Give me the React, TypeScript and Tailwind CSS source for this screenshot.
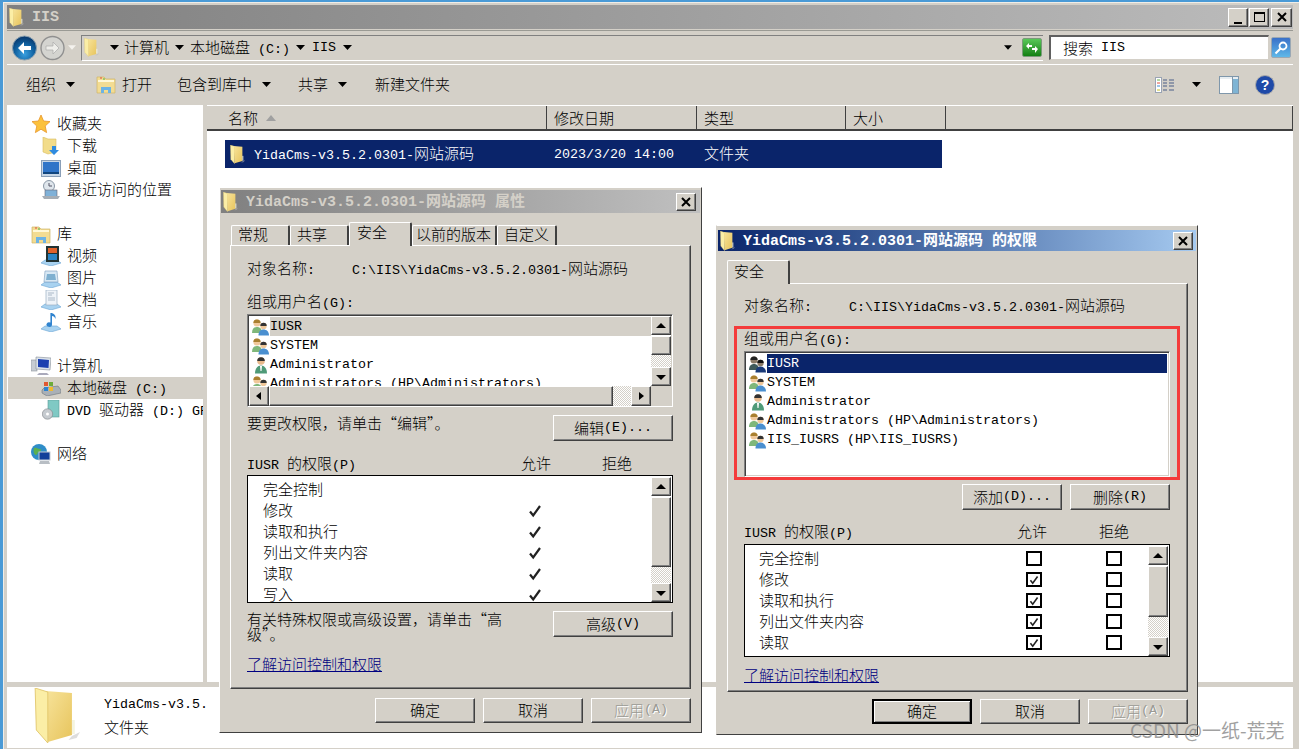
import React from "react";

const raised = "border border-t-white border-l-white border-r-[#404040] border-b-[#404040] shadow-[inset_-1px_-1px_0_#808080]";
const sunken = "border border-t-[#808080] border-l-[#808080] border-r-white border-b-white shadow-[inset_1px_1px_0_#404040,inset_-1px_-1px_0_#d4d0c8]";
const tx = "leading-[19px]";

function T({ t, big = false }: { t: string; big?: boolean }) {
  const runs = t.match(/[\x00-\x7f]+|[^\x00-\x7f]+/g) || [];
  return (
    <>
      {runs.map((r, i) =>
        /^[\x00-\x7f]/.test(r) ? (
          <span key={i} className={big ? "text-[15px] whitespace-pre" : "text-[13.33px] whitespace-pre"}>{r}</span>
        ) : (
          <span key={i} className={`text-[15px] font-['Noto_Sans_CJK_SC',sans-serif] ${big ? "font-bold" : "font-light"}`}>{r}</span>
        )
      )}
    </>
  );
}

function Tri({ c = "#000", w = 9 }: { c?: string; w?: number }) {
  return (
    <svg width={w} height={5} viewBox="0 0 9 5" className="shrink-0">
      <polygon points="0,0 9,0 4.5,5" fill={c} />
    </svg>
  );
}

function Folder({ w = 16, h = 20 }: { w?: number; h?: number }) {
  return (
    <svg width={w} height={h} viewBox="0 0 40 56" preserveAspectRatio="none" className="shrink-0">
      <defs>
        <linearGradient id="fb" x1="0" y1="0" x2="1" y2="1">
          <stop offset="0" stopColor="#f7e39a" />
          <stop offset="1" stopColor="#e7c45c" />
        </linearGradient>
      </defs>
      <polygon points="33,48 40,44 37,50 30,52" fill="#bbb" opacity="0.5" />
      <polygon points="10,3 33,5 33,47 12,54" fill="url(#fb)" />
      <polygon points="1,0 12,4 12,55 2,42" fill="#fbeea6" stroke="#e0c468" strokeWidth="0.8" />
      <rect x="33" y="32" width="2.5" height="14" fill="#f4f4e0" />
    </svg>
  );
}

function Users({ dark = false }: { dark?: boolean }) {
  const a = dark ? "#3e5a5a" : "#7fb77a";
  const b = dark ? "#1a3a78" : "#4a8fd0";
  const s = dark ? "#8a7a66" : "#f0c89a";
  const hr = dark ? "#222" : "#a98030";
  return (
    <svg width="19" height="18" viewBox="0 0 19 18" className="shrink-0">
      <circle cx="6" cy="5" r="3.6" fill={s} />
      <path d="M2.4 5a3.6 3.6 0 0 1 7.2 0z" fill={hr} />
      <path d="M1 15c0-4 2-6 5-6s5 2 5 6z" fill={a} />
      <circle cx="12.5" cy="8" r="3.2" fill={s} />
      <path d="M9.3 8a3.2 3.2 0 0 1 6.4 0z" fill={dark ? "#111" : "#333"} />
      <path d="M7.5 17.5c0-4 2-6 5-6s5.5 2 5.5 6z" fill={b} />
    </svg>
  );
}

function User() {
  return (
    <svg width="19" height="18" viewBox="0 0 19 18" className="shrink-0">
      <circle cx="10" cy="5" r="3.8" fill="#e8b98c" />
      <path d="M6.2 5a3.8 3.8 0 0 1 7.6 0z" fill="#333" />
      <path d="M4 17.5c0-5 2.5-8 6-8s6 3 6 8z" fill="#4f9a78" />
      <path d="M9 10h2l-.5 5h-1z" fill="#fff" />
    </svg>
  );
}

function ScrollBtn({ dir, className = "" }: { dir: "u" | "d" | "l" | "r"; className?: string }) {
  const pts = { u: "1,7 11,7 6,2", d: "1,3 11,3 6,8", l: "8,1 8,9 3,5", r: "4,1 4,9 9,5" }[dir];
  return (
    <div className={`${raised} bg-[#d4d0c8] flex items-center justify-center shrink-0 ${className}`}>
      <svg width="12" height="10" viewBox="0 0 12 10"><polygon points={pts} fill="#000" /></svg>
    </div>
  );
}

const checker = "bg-[repeating-conic-gradient(#d4d0c8_0_25%,#ffffff_0_50%)] bg-size-[2px_2px]";

function VBar({ thumb, track, className = "" }: { thumb: string; track: string; className?: string }) {
  return (
    <div className={`flex flex-col w-[20px] shrink-0 ${className}`}>
      <ScrollBtn dir="u" className="h-[19px]" />
      <div className={`${raised} bg-[#d4d0c8] ${thumb} mt-[1px]`} />
      <div className={`${checker} ${track}`} />
      <ScrollBtn dir="d" className="h-[19px]" />
    </div>
  );
}

function Btn({ t, w = "w-[100px]", h = "h-[25px]", off = false, def = false }: { t: string; w?: string; h?: string; off?: boolean; def?: boolean }) {
  return (
    <div
      className={`${w} ${h} shrink-0 bg-[#d4d0c8] flex items-center justify-center leading-[19px] pb-[2px] ${
        def ? "border-2 border-black shadow-[inset_1px_1px_0_#fff,inset_-1px_-1px_0_#808080]" : raised
      } ${off ? "text-[#9a9a94] [text-shadow:1px_1px_0_#fff]" : "text-black"}`}
    >
      <T t={t} />
    </div>
  );
}

function Line({ t, className = "" }: { t: string; className?: string }) {
  return (
    <div className={`h-[19px] leading-[17px] whitespace-nowrap ${className}`}>
      <T t={t} />
    </div>
  );
}

function TitleBar({ t, active, className }: { t: string; active: boolean; className: string }) {
  return (
    <div
      className={`flex items-center shrink-0 ${className} ${
        active ? "bg-linear-to-r from-[#0a246a] to-[#a6caf0] text-white" : "bg-linear-to-r from-[#808080] to-[#c0c0c0] text-[#d4d0c8]"
      }`}
    >
      <div className="ml-[2px] mr-[8px] flex"><Folder w={15} h={20} /></div>
      <span className="font-bold leading-[20px] whitespace-pre"><T t={t} big /></span>
      <div className={`${raised} ml-auto mr-[3px] w-[20px] h-[18px] bg-[#d4d0c8] flex items-center justify-center`}>
        <svg width="10" height="10" viewBox="0 0 10 10"><path d="M1 1l8 8M9 1l-8 8" stroke="#000" strokeWidth="2" /></svg>
      </div>
    </div>
  );
}

function Tab({ t, w, active = false, pad = "pl-[6px]", top = "pt-[1px]" }: { t: string; w: string; active?: boolean; pad?: string; top?: string }) {
  return (
    <div
      className={`${w} shrink-0 bg-[#d4d0c8] border-t border-l border-t-white border-l-white border-r-2 border-r-[#404040] rounded-t-[2px] flex items-start leading-[16px] ${pad} ${
        active ? `h-[24px] -mb-[1px] z-10 ${top}` : "h-[20px]"
      }`}
    >
      <T t={t} />
    </div>
  );
}

const panel = "border border-t-white border-l-white border-r-[#404040] border-b-[#404040] shadow-[inset_-1px_-1px_0_#808080]";

const userRows: { t: string; kind: "g" | "u" }[] = [
  { t: "IUSR", kind: "g" },
  { t: "SYSTEM", kind: "g" },
  { t: "Administrator", kind: "u" },
  { t: "Administrators (HP\\Administrators)", kind: "g" },
];

function UserRow({ t, kind, sel, dark }: { t: string; kind: "g" | "u"; sel?: "grey" | "blue"; dark?: boolean }) {
  return (
    <div className="flex h-[19px] items-center pl-[1px] shrink-0">
      <div className="w-[20px] shrink-0 flex justify-center">{kind === "g" ? <Users dark={dark} /> : <User />}</div>
      <div
        className={`grow h-[19px] leading-[19px] whitespace-pre ${sel === "grey" ? "bg-[#d4d0c8]" : ""} ${
          sel === "blue" ? "bg-[#0a246a] text-white" : ""
        }`}
      >
        <T t={t} />
      </div>
    </div>
  );
}

const perms = ["完全控制", "修改", "读取和执行", "列出文件夹内容", "读取", "写入"];

function Check({ size = 14 }: { size?: number }) {
  return (
    <svg width={size} height={size} viewBox="0 0 14 14" className="shrink-0">
      <path d="M2 7.5l3.2 4L12 2" fill="none" stroke="#222" strokeWidth="2.2" />
    </svg>
  );
}

function CheckBox({ on }: { on: boolean }) {
  return (
    <div className="w-[16px] h-[15px] border-2 border-black bg-white shrink-0 flex items-center justify-center">
      {on && <Check size={10} />}
    </div>
  );
}

function Link() {
  return <div className="h-[19px] leading-[19px] text-[#000080] underline whitespace-nowrap"><T t="了解访问控制和权限" /></div>;
}

function PropsDialog() {
  return (
    <div className="absolute left-[219px] top-[187px] w-[483px] h-[546px] bg-[#d4d0c8] flex flex-col border border-t-white border-l-white border-r-[#404040] border-b-[#404040] pl-[1px] pr-[1px] pt-[2px] text-black">
      <TitleBar t="YidaCms-v3.5.2.0301-网站源码 属性" active={false} className="h-[23px] pr-[1px]" />
      <div className="flex items-end h-[23px] mt-[9px] ml-[10px] shrink-0">
        <Tab t="常规" w="w-[59px]" />
        <Tab t="共享" w="w-[59px]" />
        <Tab t="安全" w="w-[63px]" active pad="pl-[7px]" />
        <Tab t="以前的版本" w="w-[85px]" pad="pl-[3px]" />
        <Tab t="自定义" w="w-[60px]" />
      </div>
      <div className={`${panel} ml-[9px] w-[461px] h-[444px] pl-[16px] pt-[13px] shrink-0`}>
        <div className="flex">
          <Line t="对象名称:" className="w-[105px]" />
          <Line t="C:\IIS\YidaCms-v3.5.2.0301-网站源码" />
        </div>
        <Line t="组或用户名(G):" className="mt-[14px]" />
        <div className={`${sunken} mt-[3px] w-[426px] h-[93px] bg-white flex flex-col p-[1px] overflow-hidden`}>
          <div className="flex h-[70px] shrink-0">
            <div className="grow overflow-hidden pt-[1px]">
              <UserRow t="IUSR" kind="g" sel="grey" />
              {userRows.slice(1).map((r) => <UserRow key={r.t} t={r.t} kind={r.kind} />)}
            </div>
            <VBar thumb="h-[19px]" track="h-[12px]" />
          </div>
          <div className="flex h-[20px] shrink-0 bg-[#d4d0c8]">
            <ScrollBtn dir="l" className="w-[20px]" />
            <div className={`${raised} w-[344px] bg-[#d4d0c8]`} />
            <div className={`${checker} w-[18px]`} />
            <ScrollBtn dir="r" className="w-[20px]" />
          </div>
        </div>
        <div className="flex justify-between mt-[8px] w-[426px] h-[26px]">
          <Line t={"要更改权限\uFF0C请单击\u201C编辑\u201D\u3002"} className="-mt-[1px]" />
          <Btn t="编辑(E)..." w="w-[120px]" h="h-[26px]" />
        </div>
        <div className="flex mt-[13px]">
          <Line t="IUSR 的权限(P)" className="w-[274px]" />
          <Line t="允许" className="w-[81px]" />
          <Line t="拒绝" />
        </div>
        <div className="mt-[2px] w-[426px] h-[128px] border border-black bg-white flex overflow-hidden">
          <div className="grow pt-[3px] overflow-hidden">
            {perms.map((p, i) => (
              <div key={p} className="flex items-center h-[21px]">
                <div className="w-[280px] pl-[15px] leading-[19px]"><T t={p} /></div>
                {i > 0 && <Check />}
              </div>
            ))}
          </div>
          <VBar thumb="h-[70px]" track="h-[16px]" className="mr-[1px] mt-[1px]" />
        </div>
        <div className="flex justify-between mt-[8px] w-[426px] h-[26px]">
          <div className="w-[262px] leading-[14px] font-['Noto_Sans_CJK_SC',sans-serif]"><T t={"有关特殊权限或高级设置\uFF0C请单击\u201C高级\u201D\u3002"} /></div>
          <Btn t="高级(V)" w="w-[120px]" h="h-[26px]" />
        </div>
        <div className="mt-[17px]"><Link /></div>
      </div>
      <div className="flex justify-end gap-[8px] mt-[9px] mr-[9px]">
        <Btn t="确定" />
        <Btn t="取消" />
        <Btn t="应用(A)" off />
      </div>
    </div>
  );
}

function PermDialog() {
  return (
    <div className="absolute left-[716px] top-[225px] w-[482px] h-[510px] bg-[#d4d0c8] flex flex-col border border-t-white border-l-[#d4d0c8] border-r-[#404040] border-b-[#404040] pl-[1px] pr-[1px] pt-[4px] text-black">
      <TitleBar t="YidaCms-v3.5.2.0301-网站源码 的权限" active className="h-[21px]" />
      <div className="flex items-end h-[32px] ml-[9px] shrink-0">
        <Tab t="安全" w="w-[63px]" active top="pt-[2px]" />
      </div>
      <div className={`${panel} ml-[9px] w-[461px] h-[409px] pl-[16px] pt-[12px] shrink-0`}>
        <div className="flex">
          <Line t="对象名称:" className="w-[105px]" />
          <Line t="C:\IIS\YidaCms-v3.5.2.0301-网站源码" />
        </div>
        <Line t="组或用户名(G):" className="mt-[14px]" />
        <div className={`${sunken} mt-[3px] w-[426px] h-[126px] bg-white pt-[2px] pl-[1px] pr-[2px]`}>
          <UserRow t="IUSR" kind="g" sel="blue" dark />
          {userRows.slice(1).map((r) => <UserRow key={r.t} t={r.t} kind={r.kind} />)}
          <UserRow t="IIS_IUSRS (HP\IIS_IUSRS)" kind="g" />
        </div>
        <div className="flex justify-end gap-[8px] mt-[7px] w-[426px]">
          <Btn t="添加(D)..." h="h-[26px]" />
          <Btn t="删除(R)" h="h-[26px]" />
        </div>
        <div className="flex mt-[12px]">
          <Line t="IUSR 的权限(P)" className="w-[273px]" />
          <Line t="允许" className="w-[82px]" />
          <Line t="拒绝" />
        </div>
        <div className="mt-[3px] w-[426px] h-[113px] border border-black bg-white flex overflow-hidden">
          <div className="grow pt-[3px] overflow-hidden">
            {perms.map((p, i) => (
              <div key={p} className="flex items-center h-[21px]">
                <div className="w-[281px] pl-[14px] leading-[19px]"><T t={p} /></div>
                <CheckBox on={i > 0} />
                <div className="w-[64px] shrink-0" />
                <CheckBox on={false} />
              </div>
            ))}
          </div>
          <VBar thumb="h-[52px]" track="h-[20px]" className="mr-[1px] mt-[1px]" />
        </div>
        <div className="mt-[8px]"><Link /></div>
      </div>
      <div className="flex justify-end gap-[8px] mt-[7px] mr-[8px]">
        <Btn t="确定" def />
        <Btn t="取消" />
        <Btn t="应用(A)" off />
      </div>
      <div className="absolute left-[17px] top-[100px] w-[446px] h-[154px] border-[3px] border-[#f43b3b]" />
    </div>
  );
}

function Star() {
  return (
    <svg width="20" height="20" viewBox="0 0 20 20">
      <polygon points="10,1 12.6,7 19,7.6 14.2,12 15.6,18.6 10,15.2 4.4,18.6 5.8,12 1,7.6 7.4,7" fill="#fbc13c" stroke="#e9962a" strokeWidth="0.8" />
    </svg>
  );
}
function Download() {
  return (
    <svg width="18" height="19" viewBox="0 0 18 19">
      <polygon points="1,0 6,2 14,2 14,15 6,17 1,15" fill="#f2dc8a" stroke="#d8bc60" strokeWidth="0.6" />
      <path d="M10 9h4v4h3l-5 5-5-5h3z" fill="#2f8be0" />
    </svg>
  );
}
function Desktop() {
  return (
    <svg width="20" height="17" viewBox="0 0 20 17">
      <rect x="0.5" y="0.5" width="19" height="16" fill="#c7d6e6" stroke="#8a9fb8" />
      <rect x="2" y="2" width="16" height="12" fill="#2f74c8" />
      <rect x="2" y="12" width="16" height="2" fill="#12467f" />
    </svg>
  );
}
function Recent() {
  return (
    <svg width="20" height="20" viewBox="0 0 20 20">
      <circle cx="8" cy="6" r="5.5" fill="#dfe6ec" stroke="#8a98a6" />
      <path d="M8 3v3h3" stroke="#556" fill="none" />
      <rect x="4" y="10" width="12" height="7" fill="#7fb1d8" stroke="#667" strokeWidth="0.6" />
      <polygon points="1,16 19,16 17,19 3,19" fill="#a5adb5" />
    </svg>
  );
}
function Library() {
  return (
    <svg width="20" height="19" viewBox="0 0 20 19">
      <path d="M1 2h7l2 2h9v14H1z" fill="#f3dc92" stroke="#cfb468" strokeWidth="0.7" />
      <rect x="2" y="5" width="16" height="2" fill="#fff8d8" />
      <rect x="4" y="2.5" width="2" height="1" fill="#e04c3c" />
      <rect x="7" y="3.5" width="2" height="1" fill="#4caf50" />
      <path d="M5 18v-6h10v6h-3v-3H8v3z" fill="#6db3e4" />
    </svg>
  );
}
function Base({ children }: { children: React.ReactNode }) {
  return (
    <svg width="20" height="20" viewBox="0 0 20 20">
      <polygon points="4,14 16,14 20,17 10,20 0,17" fill="#a8d2f0" stroke="#6aa4d4" strokeWidth="0.6" />
      {children}
    </svg>
  );
}
function Video() {
  return (
    <Base>
      <rect x="5" y="0" width="13" height="16" fill="#233" />
      <rect x="7" y="2" width="9" height="5" fill="#e0632c" />
      <rect x="7" y="8" width="9" height="6" fill="#2b86c5" />
    </Base>
  );
}
function Picture() {
  return (
    <Base>
      <polygon points="4,3 16,3 17,14 3,14" fill="#d8e8f4" stroke="#8aa8c4" strokeWidth="0.7" />
      <polygon points="6,6 14,6 15,12 5,12" fill="#7fb0d0" />
    </Base>
  );
}
function Doc() {
  return (
    <Base>
      <rect x="5" y="0" width="11" height="15" fill="#eef3f8" stroke="#9ab0c4" strokeWidth="0.7" />
      <path d="M7 3h6M7 5h4M7 8h7M7 10h7" stroke="#9ab" strokeWidth="0.8" />
    </Base>
  );
}
function Music() {
  return (
    <Base>
      <path d="M11 1v11.5a2.8 2.3 0 1 1-1.6-2V1z" fill="#2f83cf" />
      <path d="M11 1c2 1 4 2 3.6 6-.8-2-2-3-3.6-3z" fill="#2f83cf" />
    </Base>
  );
}
function Computer() {
  return (
    <svg width="20" height="20" viewBox="0 0 20 20">
      <rect x="0" y="4" width="6" height="11" fill="#c6ccd3" stroke="#8d939a" strokeWidth="0.6" />
      <polygon points="5,1 20,2 19,14 5,13" fill="#dbe2ea" stroke="#858d96" strokeWidth="0.6" />
      <polygon points="7,3 18,4 17.5,12 7,11" fill="#1b3fb0" />
      <polygon points="8,17 16,17 18,19 6,19" fill="#aab" />
    </svg>
  );
}
function Disk() {
  return (
    <svg width="20" height="16" viewBox="0 0 20 16">
      <polygon points="3,8 17,6 20,10 20,13 6,16 1,13 1,10" fill="#aab0b6" stroke="#6e757c" strokeWidth="0.6" />
      <rect x="3" y="2" width="4" height="4" fill="#e2572f" />
      <rect x="8" y="2" width="4" height="4" fill="#6dab3a" />
      <rect x="3" y="7" width="4" height="4" fill="#2f83cf" />
      <rect x="8" y="7" width="4" height="4" fill="#f0b92e" />
    </svg>
  );
}
function Dvd() {
  return (
    <svg width="18" height="20" viewBox="0 0 18 20">
      <rect x="6" y="0" width="11" height="17" fill="#7fc9c4" stroke="#5a9a98" strokeWidth="0.6" />
      <circle cx="5.5" cy="14" r="5.2" fill="#c6cbd0" stroke="#7d8388" strokeWidth="0.6" />
      <circle cx="5.5" cy="14" r="1.5" fill="#fff" />
    </svg>
  );
}
function Network() {
  return (
    <svg width="20" height="20" viewBox="0 0 20 20">
      <circle cx="8" cy="8" r="8" fill="#2f8dc8" />
      <path d="M3 4c3-1 4 1 6 1s1 3-1 3-1 3-3 3-3-4-2-7z" fill="#5bb04f" />
      <rect x="8" y="8" width="11" height="8" fill="#123f9a" stroke="#c4ccd4" />
      <polygon points="9,17 18,17 19,20 8,20" fill="#b8bec4" />
    </svg>
  );
}

function NavHead({ icon, t }: { icon: React.ReactNode; t: string }) {
  return (
    <div className="flex items-center h-[22px] pl-[24px]">
      <div className="w-[20px] flex justify-center shrink-0">{icon}</div>
      <div className={`ml-[6px] ${tx}`}><T t={t} /></div>
    </div>
  );
}
function NavItem({ icon, t, sel = false }: { icon: React.ReactNode; t: string; sel?: boolean }) {
  return (
    <div className={`flex items-center h-[22px] pl-[34px] whitespace-nowrap ml-[1px] ${sel ? "bg-[#d4d0c8]" : ""}`}>
      <div className="w-[20px] flex justify-center shrink-0 -ml-[1px]">{icon}</div>
      <div className={`ml-[6px] whitespace-pre ${tx}`}><T t={t} /></div>
    </div>
  );
}

function HeaderCell({ t, w, children, pl = "pl-[7px]" }: { t: string; w: string; children?: React.ReactNode; pl?: string }) {
  return (
    <div className={`${w} shrink-0 h-full border-r border-r-[#404040] flex items-center ${pl} ${tx}`}>
      <T t={t} />
      {children}
    </div>
  );
}

function Nav() {
  return (
    <div className="w-[196px] shrink-0 bg-white pt-[8px] overflow-hidden">
      <NavHead icon={<Star />} t="收藏夹" />
      <NavItem icon={<Download />} t="下载" />
      <NavItem icon={<Desktop />} t="桌面" />
      <NavItem icon={<Recent />} t="最近访问的位置" />
      <div className="h-[22px]" />
      <NavHead icon={<Library />} t="库" />
      <NavItem icon={<Video />} t="视频" />
      <NavItem icon={<Picture />} t="图片" />
      <NavItem icon={<Doc />} t="文档" />
      <NavItem icon={<Music />} t="音乐" />
      <div className="h-[22px]" />
      <NavHead icon={<Computer />} t="计算机" />
      <NavItem icon={<Disk />} t="本地磁盘 (C:)" sel />
      <NavItem icon={<Dvd />} t="DVD 驱动器 (D:) GRMSXVOL" />
      <div className="h-[22px]" />
      <NavHead icon={<Network />} t="网络" />
    </div>
  );
}

export default function App() {
  return (
    <div lang="zh-CN" className="relative w-[1299px] h-[749px] overflow-hidden bg-[#4a9ad6] pl-[3px] pt-[2px] font-['Liberation_Mono','Noto_Sans_CJK_SC',monospace] text-black">
      <div className="w-full h-full bg-[#d4d0c8] border-t border-l border-t-[#f0eee8] border-l-[#f0eee8] pt-[2px] pl-[3px] pr-[6px] flex flex-col">
        {/* title */}
        <div className="h-[24px] shrink-0 flex items-center bg-linear-to-r from-[#808080] to-[#bcbcbc]">
          <div className="ml-[2px] mr-[8px] flex"><Folder w={15} h={19} /></div>
          <span className="font-bold text-[#d4d0c8]"><T t="IIS" big /></span>
          <div className="ml-auto flex mr-[1px] gap-[1px]">
            <div className={`${raised} w-[20px] h-[19px] bg-[#d4d0c8] flex items-end justify-center pb-[2px]`}><div className="w-[8px] h-[2px] bg-black" /></div>
            <div className={`${raised} w-[20px] h-[19px] bg-[#d4d0c8] flex items-center justify-center mr-[1px]`}><div className="w-[11px] h-[10px] border border-black border-t-2" /></div>
            <div className={`${raised} w-[21px] h-[19px] bg-[#d4d0c8] flex items-center justify-center`}>
              <svg width="10" height="10" viewBox="0 0 10 10"><path d="M1 1l8 8M9 1l-8 8" stroke="#000" strokeWidth="2" /></svg>
            </div>
          </div>
        </div>
        {/* address */}
        <div className="mt-[1px] h-[35px] shrink-0 flex items-center border-t border-t-[#9a9a94] border-b border-b-white pl-[5px]">
          <svg width="25" height="26" viewBox="0 0 25 26" className="shrink-0">
            <defs>
              <radialGradient id="bk" cx="0.5" cy="0.75" r="0.7">
                <stop offset="0" stopColor="#3aa0e0" />
                <stop offset="0.6" stopColor="#0f5f9e" />
                <stop offset="1" stopColor="#083a70" />
              </radialGradient>
            </defs>
            <circle cx="12.5" cy="13" r="12" fill="url(#bk)" stroke="#8aa0b0" />
            <path d="M6 13l6-6v4h7v4h-7v4z" fill="#fff" />
          </svg>
          <svg width="25" height="26" viewBox="0 0 25 26" className="ml-[3px] shrink-0">
            <circle cx="12.5" cy="13" r="11.5" fill="#d4d4d0" stroke="#909090" strokeWidth="1.4" />
            <path d="M19 13l-6-6v4H6v4h7v4z" fill="#eeeeea" stroke="#aaa" strokeWidth="0.7" />
          </svg>
          <div className="ml-[3px]"><Tri c="#f4f2ee" w={8} /></div>
          <div className="ml-[5px] w-[962px] h-[26px] border-t border-l border-t-[#808080] border-l-[#808080] border-b border-b-white flex items-center shrink-0 pl-[2px]">
            <Folder w={15} h={19} />
            <div className="ml-[11px]"><Tri /></div>
            <div className={`ml-[5px] ${tx}`}><T t="计算机" /></div>
            <div className="ml-[6px]"><Tri /></div>
            <div className={`ml-[6px] whitespace-pre ${tx}`}><T t="本地磁盘 (C:)" /></div>
            <div className="ml-[6px]"><Tri /></div>
            <div className={`ml-[7px] ${tx}`}><T t="IIS" /></div>
            <div className="ml-[7px]"><Tri /></div>
            <div className="ml-auto"><Tri w={8} /></div>
            <div className="ml-[10px] mr-[1px] w-[20px] h-[19px] rounded-[2px] border border-[#7a9a7a] bg-linear-to-b from-[#58c858] to-[#108010] flex items-center justify-center">
              <svg width="14" height="12" viewBox="0 0 14 12"><path d="M1 4l3-3v2h3v2H4v2zM13 7l-3 4V8H7V6h3V4z" fill="#fff" /></svg>
            </div>
          </div>
          <div className={`ml-[6px] w-[220px] h-[25px] bg-white border-t-2 border-l-2 border-t-[#606060] border-l-[#606060] border-b border-r border-b-[#d4d0c8] border-r-[#d4d0c8] flex items-center pl-[12px] pb-[2px] shrink-0 whitespace-pre ${tx}`}>
            <T t="搜索 IIS" />
          </div>
          <div className="ml-[2px] w-[20px] h-[21px] rounded-[2px] border border-[#9aa8b4] bg-linear-to-b from-[#3a70c8] to-[#5fb8e8] flex items-center justify-center shrink-0">
            <svg width="14" height="14" viewBox="0 0 14 14"><circle cx="9" cy="5" r="3.5" fill="none" stroke="#fff" strokeWidth="1.8" /><path d="M6.5 7.5L1.5 12.5" stroke="#fff" strokeWidth="2.2" /></svg>
          </div>
        </div>
        {/* toolbar */}
        <div className="h-[40px] shrink-0 flex items-center pl-[19px] pb-[1px]">
          <div className={tx}><T t="组织" /></div>
          <div className="ml-[10px]"><Tri /></div>
          <div className="ml-[21px]"><Library /></div>
          <div className={`ml-[6px] ${tx}`}><T t="打开" /></div>
          <div className={`ml-[25px] ${tx}`}><T t="包含到库中" /></div>
          <div className="ml-[10px]"><Tri /></div>
          <div className={`ml-[27px] ${tx}`}><T t="共享" /></div>
          <div className="ml-[10px]"><Tri /></div>
          <div className={`ml-[28px] ${tx}`}><T t="新建文件夹" /></div>
          <svg width="20" height="16" viewBox="0 0 20 16" className="ml-auto">
            <rect x="0.5" y="0.5" width="6" height="15" fill="#fff" stroke="#9aa4b4" />
            <path d="M2 3h3" stroke="#6ab04c" /><path d="M2 6h3" stroke="#e04c3c" /><path d="M2 9h3" stroke="#3a8ad0" /><path d="M2 13h3" stroke="#c8c020" />
            <path d="M8 3h4M14 3h5M8 6h4M14 6h5M8 9h4M14 9h5M8 13h4M14 13h5" stroke="#4a5f88" />
          </svg>
          <div className="ml-[17px]"><Tri /></div>
          <svg width="20" height="18" viewBox="0 0 20 18" className="ml-[18px]">
            <rect x="0.5" y="0.5" width="19" height="17" fill="#fff" stroke="#7f97ab" />
            <rect x="14" y="1" width="5" height="16" fill="#7fb4d4" />
            <rect x="1" y="1" width="18" height="2" fill="#e8eef2" />
            <path d="M13.5 1v16" stroke="#7f97ab" />
          </svg>
          <svg width="20" height="20" viewBox="0 0 20 20" className="ml-[16px] mr-[18px]">
            <circle cx="10" cy="10" r="9.5" fill="#1f4aa8" stroke="#a8a8a8" />
            <text x="10" y="15" textAnchor="middle" fontSize="14" fontWeight="bold" fill="#fff" fontFamily="Liberation Sans">?</text>
          </svg>
        </div>
        {/* main */}
        <div className="h-[577px] shrink-0 flex">
          <Nav />
          <div className="w-[4px] shrink-0" />
          <div className="grow bg-white flex flex-col">
            <div className="h-[26px] shrink-0 bg-[#d4d0c8] border-t border-t-white border-b-2 border-b-[#404040] flex">
              <HeaderCell t="名称" w="w-[340px]" pl="pl-[21px]">
                <svg width="10" height="6" viewBox="0 0 10 6" className="ml-[8px]"><polygon points="0,6 10,6 5,0" fill="#a0a0a0" /></svg>
              </HeaderCell>
              <HeaderCell t="修改日期" w="w-[150px]" />
              <HeaderCell t="类型" w="w-[149px]" />
              <HeaderCell t="大小" w="w-[100px]" />
              <div className="grow border-r border-r-[#404040]" />
            </div>
            <div className="mt-[9px] ml-[18px] w-[717px] h-[28px] bg-[#0a246a] text-white flex items-center">
              <div className="ml-[5px] flex"><Folder w={15} h={19} /></div>
              <div className={`w-[300px] ml-[9px] ${tx}`}><T t="YidaCms-v3.5.2.0301-网站源码" /></div>
              <div className={`w-[150px] ${tx}`}><T t="2023/3/20 14:00" /></div>
              <div className={tx}><T t="文件夹" /></div>
            </div>
          </div>
        </div>
        {/* details */}
        <div className="mt-[5px] h-[61px] shrink-0 bg-white flex">
          <div className="ml-[27px] mt-[1px]"><Folder w={46} h={56} /></div>
          <div className="ml-[24px]">
            <div className="mt-[8px] h-[22px] leading-[19px] whitespace-nowrap"><T t="YidaCms-v3.5." /></div>
            <div className="leading-[19px]"><T t="文件夹" /></div>
          </div>
        </div>
      </div>
      <PropsDialog />
      <PermDialog />
      <div className="absolute left-[1130px] top-[718px] text-[19px] leading-[24px] text-[#8a8a8a] opacity-80 font-['Noto_Sans_CJK_SC',sans-serif] whitespace-nowrap">CSDN @一纸-荒芜</div>
    </div>
  );
}
